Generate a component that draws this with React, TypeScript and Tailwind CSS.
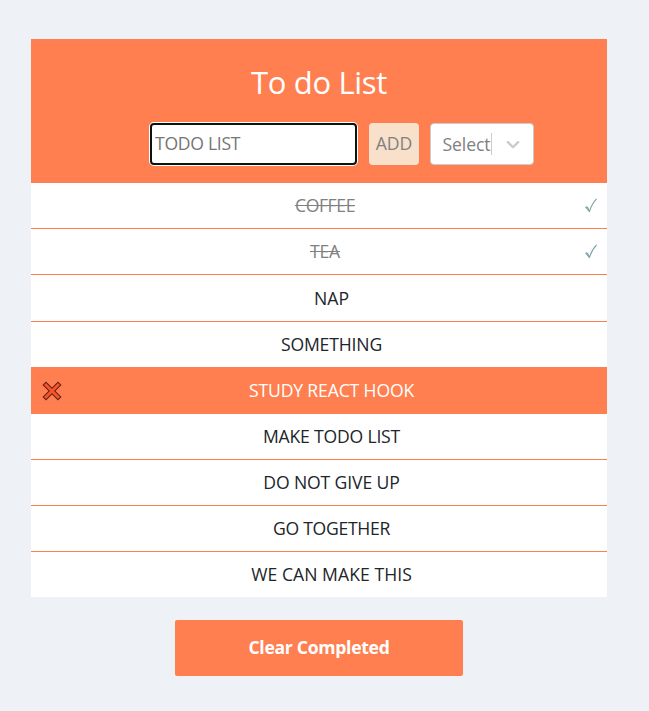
type Todo = { text: string; row: string; label: string; done?: boolean; active?: boolean };

const todos: Todo[] = [
  { text: "COFFEE", row: "h-[46px] border-b pb-px", label: "tracking-[-0.4px]", done: true },
  { text: "TEA", row: "h-[46px] border-b pb-px", label: "tracking-[-0.2px]", done: true },
  { text: "NAP", row: "h-[47px] border-b", label: "tracking-[0px]" },
  { text: "SOMETHING", row: "h-[46px] border-b pb-px", label: "tracking-[-0.15px]" },
  { text: "STUDY REACT HOOK", row: "h-[46px] border-b pb-px", label: "tracking-[-0.15px]", active: true },
  { text: "MAKE TODO LIST", row: "h-[46px] border-b pb-px", label: "tracking-[-0.2px]" },
  { text: "DO NOT GIVE UP", row: "h-[46px] border-b pb-px", label: "tracking-[-0.12px]" },
  { text: "GO TOGETHER", row: "h-[46px] border-b pb-px", label: "tracking-[-0.3px]" },
  { text: "WE CAN MAKE THIS", row: "h-[45px] pb-px", label: "tracking-[0.05px]" },
];

function Check() {
  return (
    <svg className="h-[15px] w-3" viewBox="0 0 12 15" fill="none" stroke="#7fa3a6" strokeWidth="1.2">
      <path d="M0.6 8.8 L4.4 13.4 C6 8.6 8 4.4 11.6 0.8" />
      <path d="M0.8 8.8 L2.6 9.4 L4.4 13.4" />
    </svg>
  );
}

function Cross() {
  return (
    <svg className="mt-px h-5 w-5" viewBox="0 0 20 20" strokeLinecap="square">
      <path d="M4 4 L16 16 M16 4 L4 16" stroke="#5c2413" strokeWidth="5" />
      <path d="M4 4 L16 16 M16 4 L4 16" stroke="#f9522c" strokeWidth="2.9" />
    </svg>
  );
}

function Row({ todo }: { todo: Todo }) {
  const tone = todo.active ? "bg-[#ff7f50] text-white" : todo.done ? "bg-white text-[#808080]" : "bg-white text-[#212529]";
  const columns = todo.done ? "grid-cols-[42px_1fr_30px]" : "grid-cols-[42px_1fr_17px]";
  return (
    <li className={`grid items-center border-[#ff7f50] ${columns} ${todo.row} ${tone}`}>
      <span className="flex justify-center">{todo.active && <Cross />}</span>
      <span className="text-center text-[17.6px] leading-6 whitespace-nowrap">
        <span className={`${todo.label} ${todo.done ? "line-through decoration-1" : ""}`}>{todo.text}</span>
      </span>
      <span className="flex justify-end pr-[10px]">{todo.done && <Check />}</span>
    </li>
  );
}

export default function App() {
  return (
    <main className="h-[711px] w-[649px] overflow-hidden bg-[#eef1f6] pt-[39px] pl-[31px] font-['Open_Sans','Noto_Sans',sans-serif]">
      <section className="w-[576px]">
        <header className="h-36 bg-[#ff7f50] pt-[23px]">
          <h1 className="text-center text-[31px] leading-[40px] tracking-[-0.35px] text-white">To do List</h1>
          <form className="mt-[21px] flex items-start pl-[119px]">
            <input
              className="h-[42px] w-[207px] rounded-[4px] border-2 border-[#101010] bg-white px-[3px] pb-[2px] text-[17.6px] tracking-[-0.3px] ring-1 ring-white outline-none placeholder:text-[#757575] placeholder:opacity-100"
              placeholder="TODO LIST"
            />
            <button type="button" className="ml-3 h-[42px] w-[50px] rounded-[4px] bg-[#f8e0ca] pb-[2px] text-center text-[17.6px] text-[#808080]">
              ADD
            </button>
            <div className="ml-[11px] flex h-[42px] w-[104px] items-center rounded-[4px] border border-[#cccccc] bg-white">
              <span className="w-[49px] pl-[11.5px] text-[17.6px] tracking-[-0.1px] whitespace-nowrap text-[#808080]">Select</span>
              <span className="ml-[11px] h-[22px] w-px bg-[#cccccc]" />
              <svg className="ml-[10px] h-[22px] w-[22px]" viewBox="0 0 20 20" fill="#cccccc">
                <path d="M4.516 7.548c0.436-0.446 1.043-0.481 1.576 0l3.908 3.747 3.908-3.747c0.533-0.481 1.141-0.446 1.574 0 0.436 0.445 0.408 1.197 0 1.615-0.406 0.418-4.695 4.502-4.695 4.502-0.217 0.223-0.502 0.335-0.787 0.335s-0.57-0.112-0.789-0.335c0 0-4.287-4.084-4.695-4.502s-0.436-1.17 0-1.615z" />
              </svg>
            </div>
          </form>
        </header>
        <ul>
          {todos.map((todo) => (
            <Row key={todo.text} todo={todo} />
          ))}
        </ul>
        <button type="button" className="mx-auto mt-[23px] block h-14 w-72 rounded-[2px] bg-[#ff7f50] pb-[2px] text-[17.6px] font-bold tracking-[-0.3px] text-white">
          Clear Completed
        </button>
      </section>
    </main>
  );
}
